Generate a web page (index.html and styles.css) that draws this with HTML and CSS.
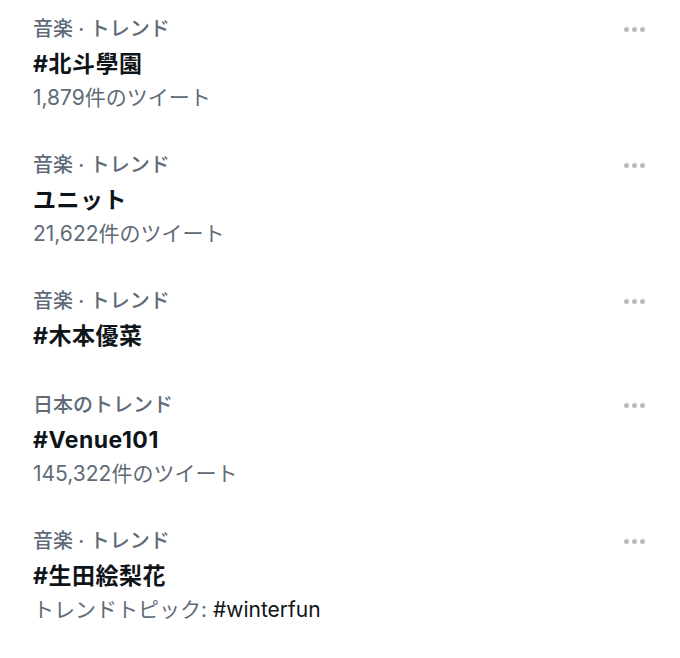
FILE: index.html
```html
<!DOCTYPE html>
<html lang="ja">
<head>
<meta charset="UTF-8">
<meta name="viewport" content="width=device-width, initial-scale=1.0">
<title>トレンド</title>
<link rel="stylesheet" href="styles.css">
</head>
<body>
  <div class="trends">
    <div class="trend">
      <div class="trend-body">
        <div class="meta">音楽 · トレンド</div>
        <div class="name">#北斗學園</div>
        <div class="count">1,879件のツイート</div>
      </div>
      <div class="more"><span></span><span></span><span></span></div>
    </div>

    <div class="trend">
      <div class="trend-body">
        <div class="meta">音楽 · トレンド</div>
        <div class="name">ユニット</div>
        <div class="count">21,622件のツイート</div>
      </div>
      <div class="more"><span></span><span></span><span></span></div>
    </div>

    <div class="trend">
      <div class="trend-body">
        <div class="meta">音楽 · トレンド</div>
        <div class="name">#木本優菜</div>
      </div>
      <div class="more"><span></span><span></span><span></span></div>
    </div>

    <div class="trend">
      <div class="trend-body">
        <div class="meta">日本のトレンド</div>
        <div class="name">#Venue101</div>
        <div class="count">145,322件のツイート</div>
      </div>
      <div class="more"><span></span><span></span><span></span></div>
    </div>

    <div class="trend">
      <div class="trend-body">
        <div class="meta">音楽 · トレンド</div>
        <div class="name">#生田絵梨花</div>
        <div class="count">トレンドトピック: <span class="topic">#winterfun</span></div>
      </div>
      <div class="more"><span></span><span></span><span></span></div>
    </div>
  </div>
</body>
</html>
```

FILE: styles.css
```css
body {
  margin: 0;
  background: #fff;
  font-family: Inter, "Noto Sans CJK JP", sans-serif;
}
.trend {
  display: flex;
  justify-content: space-between;
  align-items: flex-start;
  padding: 12px 35px 22px 33px;
}
.meta {
  font-size: 20px;
  font-weight: 500;
  line-height: 34px;
  color: #5f6b77;
}
.name {
  font-size: 23px;
  font-weight: bold;
  line-height: 36px;
  letter-spacing: 0.5px;
  color: #0f1419;
}
.count {
  font-size: 21px;
  line-height: 32px;
  color: #5f6b77;
}
.topic {
  color: #0f1419;
}
.more {
  display: flex;
  gap: 3px;
  padding-top: 15px;
}
.more span {
  width: 5px;
  height: 5px;
  border-radius: 50%;
  background: #b8bdc2;
}
```
